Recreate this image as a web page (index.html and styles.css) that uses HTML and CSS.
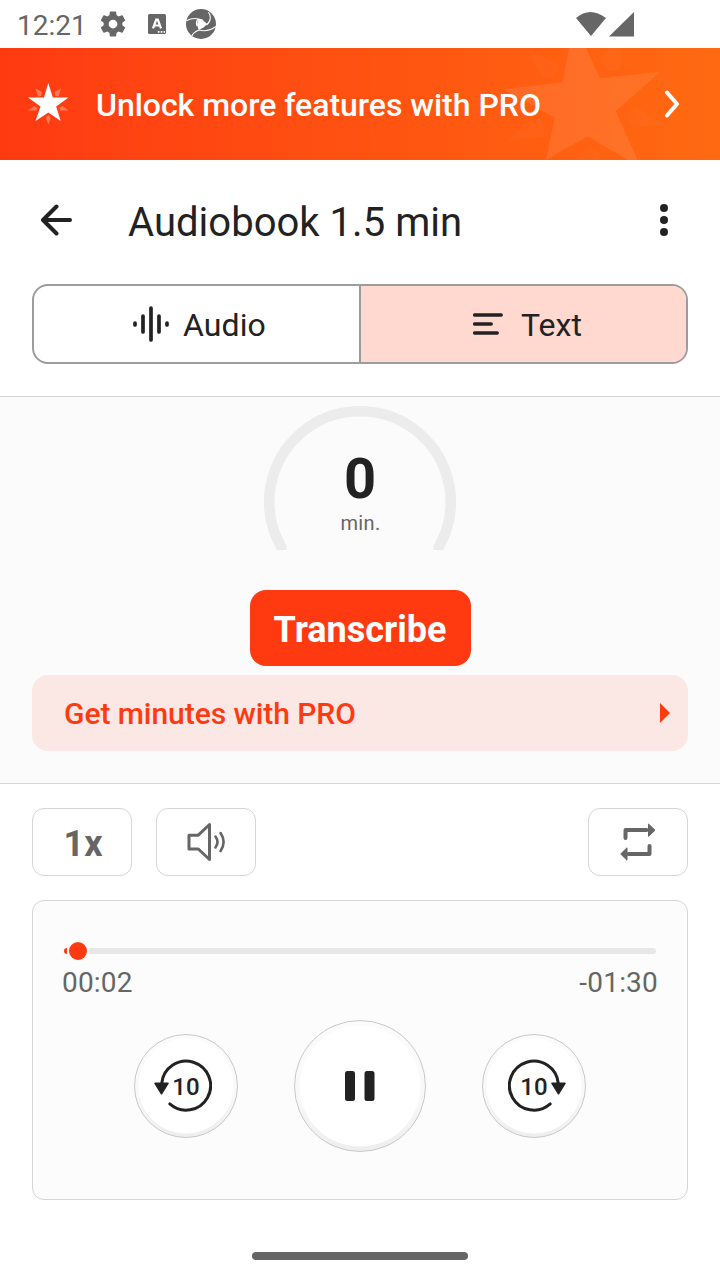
FILE: index.html
```html
<!DOCTYPE html>
<html lang="en">
<head>
<meta charset="utf-8">
<title>Audiobook 1.5 min</title>
<link rel="stylesheet" href="styles.css">
</head>
<body>
<div class="screen">
  <header class="status">
    <span class="clock">12:21</span>
    <svg class="gear" width="30" height="30" viewBox="0 0 24 24"><path fill="#666" d="M19.430 12.980c.04-.32.07-.64.07-.98s-.03-.66-.07-.98l2.110-1.650c.19-.15.24-.42.12-.64l-2-3.460c-.12-.22-.39-.3-.61-.22l-2.490 1c-.52-.4-1.080-.73-1.690-.98l-.38-2.650A.49.49 0 0 0 14 2h-4c-.25 0-.46.18-.49.42l-.38 2.650c-.61.25-1.170.59-1.690.98l-2.490-1c-.23-.09-.49 0-.61.22l-2 3.460c-.13.22-.07.49.12.64l2.110 1.650c-.04.32-.07.65-.07.98s.03.66.07.98l-2.110 1.650c-.19.15-.24.42-.12.64l2 3.460c.12.22.39.3.61.22l2.490-1c.52.4 1.080.73 1.690.98l.38 2.650c.03.24.24.42.49.42h4c.25 0 .46-.18.49-.42l.38-2.650c.61-.25 1.170-.59 1.690-.98l2.490 1c.23.09.49 0 .61-.22l2-3.460c.12-.22.07-.49-.12-.64zM12 15.500a3.500 3.500 0 1 1 0-7 3.500 3.500 0 0 1 0 7z"/></svg>
    <svg class="badge-a" width="18" height="20" viewBox="0 0 18 20"><rect width="18" height="20" rx="1.500" fill="#666"/><path d="M5 14.300 8.200 5.600h1.600l3.200 8.700M6.600 11.500h5" fill="none" stroke="#fff" stroke-width="2.200"/><path d="M9.800 17.800h1.700M12.700 17.800h1.700M15.500 17.800h1.500" stroke="#fff" stroke-width="1.700"/></svg>
    <svg class="aperture" width="30" height="30" viewBox="0 0 30 30"><circle cx="15" cy="15" r="15" fill="#666"/><path fill="#fff" d="M12 9.800 17 11.300 21.300 15 17.500 18.500 12.800 21 11 16z"/><path fill="none" stroke="#fff" stroke-width="1.100" d="M.5 11.800Q8 7.500 17 11.300M22.500 3.200Q27 10 20.500 16M30 17.500Q22 23.500 12.800 21M6 27Q6.500 24 12.800 21M11 17Q9.500 13 12 9.800"/></svg>
    <svg class="signal" width="60" height="28" viewBox="0 0 60 28"><path fill="#666" d="M1 8Q15-4 31 8L16 26zM34 26.500 59 2v24.500z"/></svg>
  </header>

  <section class="promo">
    <svg class="promo-bg" width="720" height="112" viewBox="0 0 720 112"><g fill="#fff"><path opacity=".09" d="M569 0h17l14 30.300 60-6.300-44.300 39L637.500 112H628L587.500 88.300 546 112 554.700 69.700 503 41.300 562.700 34.300z"/><path opacity=".025" d="M528 2.500 558.500 16 554 29.700 542.700 30.300zM601.500 12 608.500 0H624L620 22 608 23zM626.500 67 635 58.500 663.500 76.500 632.500 79.500zM507.500 92.500 524 77.500 539 70.500 545 75 543.500 89zM578.500 108 590 99.700 600 106 598.500 112H579z"/></g></svg>
    <svg class="star" width="42" height="42" viewBox="0 0 42 42"><path fill="#ff7954" d="M7.500 5.500 14 9l-1 4-3 .5zM33 5.500 26.500 9l1 4 3 .5zM0 27.500l6-4.500 3 1.500-.5 3zM40.500 27.500l-6-4.500-3 1.500.5 3zM20.300 41.500l-2.500-7 2.500-2.500 2.500 2.500z"/><path fill="#fff" d="M20.300 0 24.800 14.500 40.500 14.500 28.200 23.500 32.700 38 20.300 29.500 7.500 38 12.500 23.500 0 14.500 16 14.500z"/></svg>
    <span class="promo-text">Unlock more features with PRO</span>
    <svg class="chevron" width="16" height="28" viewBox="0 0 16 28"><path d="M3 2.500 13 14 3 25.500" fill="none" stroke="#fff" stroke-width="4" stroke-linecap="round" stroke-linejoin="round"/></svg>
  </section>

  <nav class="toolbar">
    <svg class="back" width="32" height="32" viewBox="0 0 32 32"><path d="M16.500 2.500 3 16l13.500 13.500M3 16h27" fill="none" stroke="#222" stroke-width="4" stroke-linecap="round" stroke-linejoin="round"/></svg>
    <h1 class="title">Audiobook 1.5 min</h1>
    <svg class="more" width="8" height="32" viewBox="0 0 8 32"><g fill="#222"><circle cx="4" cy="4" r="4"/><circle cx="4" cy="16" r="4"/><circle cx="4" cy="28" r="4"/></g></svg>
  </nav>

  <div class="tabs">
    <div class="tab audio">
      <svg width="36" height="36" viewBox="0 0 36 36"><path d="M2 17v2M10 10v16M18 2v32M26 10v16M34 17v2" stroke="#222" stroke-width="3.700" stroke-linecap="round"/></svg>
      <span>Audio</span>
    </div>
    <div class="tab text">
      <svg width="30" height="22" viewBox="0 0 30 22"><path d="M1.700 2h26.500M1.700 11h16.500M1.700 20h22.500" stroke="#222" stroke-width="3.500" stroke-linecap="round"/></svg>
      <span>Text</span>
    </div>
  </div>

  <main class="transcribe">
    <div class="gauge">
      <svg class="arc" width="192" height="144" viewBox="0 0 192 144"><path d="M17.500 141.400A90.700 90.700 0 1 1 174.500 141.400" fill="none" stroke="#ececec" stroke-width="10.600" stroke-linecap="round"/></svg>
      <strong class="count">0</strong>
      <span class="unit">min.</span>
    </div>
    <div class="action"><span>Transcribe</span></div>
    <div class="get-pro"><span>Get minutes with PRO</span>
      <svg width="10" height="20" viewBox="0 0 10 20"><path d="M0 0l10 10L0 20z" fill="#ff3a11"/></svg>
    </div>
  </main>

  <div class="options">
    <div class="option speed">1x</div>
    <div class="option volume"><svg width="40" height="40" viewBox="0 0 40 40"><g fill="none" stroke="#666" stroke-linecap="round" stroke-linejoin="round"><path stroke-width="3" d="M3 13.200h9.300L23.500 2.500v35L12.300 27H3z"/><path stroke-width="2.600" d="M29.500 14.500q4 5.500 0 11M34.600 11q6 9 0 18"/></g></svg></div>
    <div class="option repeat"><svg width="36" height="38" viewBox="0 0 36 38"><path d="M5.500 15V7h21M29.500 23v8h-21" fill="none" stroke="#666" stroke-width="4" stroke-linecap="round" stroke-linejoin="round"/><path fill="#666" stroke="#666" stroke-linejoin="round" d="M28.500 1 35 7.200 28.500 13.400zM7 24.800 .7 31 7 37.200z"/></svg></div>
  </div>

  <section class="player">
    <svg class="seek" width="592" height="18" viewBox="0 0 592 18"><path d="M25 6H589a3 3 0 0 1 0 6H25z" fill="#e7e7e7"/><path d="M3 6a3 3 0 0 0 0 6z" fill="#ff3a11"/><circle cx="14" cy="9" r="9" fill="#ff3a11"/></svg>
    <div class="times"><span>00:02</span><span class="left">-01:30</span></div>
    <div class="buttons">
      <div class="round"><svg class="skip back10" width="60" height="56" viewBox="0 0 60 56"><path d="M9.700 25.500A24.500 24.500 0 1 1 17.800 45.900" fill="none" stroke="#222" stroke-width="3" stroke-linecap="round"/><path d="M3 25.300h13L9.500 35.800z" fill="#222" stroke="#222" stroke-width="1.500" stroke-linejoin="round"/></svg><span class="ten">10</span></div>
      <div class="round big"><svg width="30" height="30" viewBox="0 0 30 30"><path fill="#222" d="M2.500 0h5q2.500 0 2.500 2.500v25q0 2.500-2.500 2.500h-5Q0 30 0 27.500v-25Q0 0 2.500 0zM22 0h5q2.500 0 2.500 2.500v25q0 2.500-2.500 2.500h-5q-2.500 0-2.500-2.500v-25Q19.500 0 22 0z"/></svg></div>
      <div class="round"><svg class="skip forward10" width="60" height="56" viewBox="0 0 60 56"><g transform="matrix(-1 0 0 1 60 0)"><path d="M9.700 25.500A24.500 24.500 0 1 1 17.800 45.900" fill="none" stroke="#222" stroke-width="3" stroke-linecap="round"/><path d="M3 25.300h13L9.500 35.800z" fill="#222" stroke="#222" stroke-width="1.500" stroke-linejoin="round"/></g></svg><span class="ten">10</span></div>
    </div>
  </section>
  <div class="home"></div>
</div>
</body>
</html>
```
FILE: styles.css
```css
* { box-sizing: border-box; }
body { margin: 0; background: #fff; font-family: Roboto, sans-serif; color: #222; }
svg { display: block; flex: none; }
.screen { width: 720px; height: 1280px; display: flex; flex-direction: column; overflow: hidden; }
.status { height: 48px; flex: none; display: flex; align-items: center; padding: 0 85px 0 17px; }
.clock { width: 81px; font-size: 28px; line-height: 48px; color: #666; padding-top: 3px; white-space: nowrap; }
.badge-a { margin-left: 20px; }
.aperture { margin-left: 20px; }
.signal { margin-left: auto; }
.promo { height: 112px; flex: none; display: flex; align-items: center; padding: 0 40px 0 28px; position: relative; background: linear-gradient(90deg, #ff3a11, #ff6a11); }
.promo-bg { position: absolute; left: 0; top: 0; }
.star, .promo-text, .chevron { position: relative; }
.promo-text { margin-left: 26px; font-size: 32px; font-weight: 500; letter-spacing: -.03px; color: #fff; white-space: nowrap; padding-top: 2px; }
.chevron { margin-left: auto; }
.toolbar { height: 124px; flex: none; display: flex; align-items: center; padding: 0 52px 4px 40px; }
.title { margin: 0 0 0 56px; font-size: 40px; font-weight: 400; padding-top: 4px; white-space: nowrap; letter-spacing: .03px; }
.more { margin-left: auto; }
.tabs { height: 80px; flex: none; margin: 0 32px; display: flex; border: 2px solid #9c9c9c; border-radius: 16px; overflow: hidden; }
.tab { display: flex; align-items: center; font-size: 32px; white-space: nowrap; }
.tab span { padding-top: 2px; }
.audio { width: 325px; padding-left: 99px; gap: 14px; letter-spacing: .1px; }
.text { width: 327px; padding-left: 112px; gap: 18px; background: #ffd8d0; border-left: 2px solid #9c9c9c; }
.transcribe { height: 388px; flex: none; margin-top: 32px; padding: 9px 32px 0; display: flex; flex-direction: column; align-items: center; background: #fbfbfb; border: solid #d6d6d6; border-width: 1px 0; }
.gauge { width: 192px; height: 144px; display: grid; grid-template-rows: 44px 56px 44px; justify-items: center; }
.arc { grid-area: 1 / 1 / 4 / 2; }
.count { grid-area: 2 / 1; font-size: 56px; line-height: 58px; font-weight: 700; }
.unit { grid-area: 3 / 1; font-size: 20px; line-height: 34px; color: #666; letter-spacing: .3px; padding-left: 1px; }
.action { width: 221px; height: 76px; margin: 40px 0 9px; border-radius: 16px; background: #ff3a11; color: #fff; font-size: 36px; font-weight: 700; line-height: 80px; text-align: center; }
.get-pro { width: 656px; height: 76px; border-radius: 16px; background: #fbe7e4; color: #ff3a11; display: flex; align-items: center; justify-content: space-between; padding: 0 18px 0 32px; font-size: 30px; font-weight: 500; letter-spacing: -.05px; white-space: nowrap; }
.options { margin: 24px 32px; height: 68px; flex: none; display: flex; gap: 24px; }
.option { width: 100px; height: 68px; border: 1px solid #d6d6d6; border-radius: 12px; display: flex; align-items: center; justify-content: center; color: #666; }
.speed { font-size: 36px; font-weight: 700; padding: 4px 0 0 2px; }
.volume { padding-right: 1px; }
.repeat { margin-left: auto; }
.player { height: 300px; flex: none; margin: 0 32px; padding: 41px 31px 0; border: 1px solid #d6d6d6; border-radius: 12px; background: #fcfcfc; }
.times { display: flex; justify-content: space-between; margin: 7px -2px 0; font-size: 28px; line-height: 32px; letter-spacing: .2px; color: #666; }
.buttons { margin-top: 21px; height: 132px; display: flex; align-items: center; justify-content: center; gap: 56px; }
.round { width: 104px; height: 104px; border-radius: 50%; border: 1px solid #c8c8c8; background: radial-gradient(circle closest-side, #fff 92.500%, transparent 93.500%), linear-gradient(#fcfcfc, #f8f8f8 60%, #eee); display: grid; place-items: center; }
.round > * { grid-area: 1 / 1; }
.big { width: 132px; height: 132px; }
.back10 { margin-right: 8px; }
.forward10 { margin-left: 8px; }
.ten { font-size: 24px; font-weight: 500; line-height: 28px; padding-top: 1px; }
.home { width: 216px; height: 8px; flex: none; border-radius: 4px; background: #666; margin: 52px auto 0; }
```
